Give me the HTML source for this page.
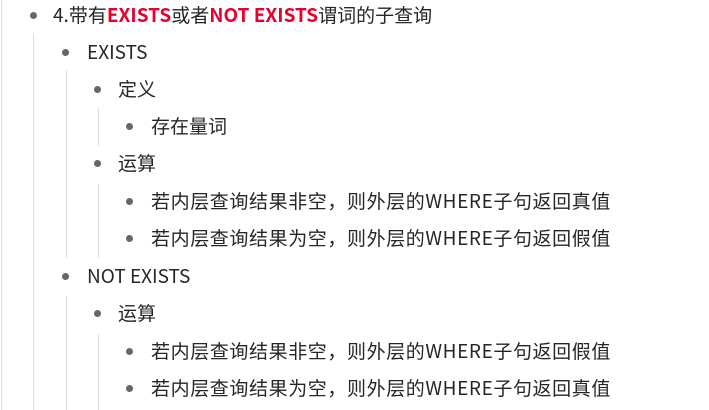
<!DOCTYPE html>
<html><head><meta charset="utf-8"><style>
body{margin:0;width:709px;height:410px;background:#fff;position:relative;overflow:hidden;font-family:"Noto Sans CJK SC","Liberation Sans",sans-serif;color:#262626;font-size:19px}
.t{position:absolute;white-space:nowrap;line-height:24px}
.b{position:absolute;width:7px;height:7px;border-radius:50%;background:#666}
.l{position:absolute;width:1px;background:#ddd}
.r{color:#e8002d;font-weight:bold}
.w{letter-spacing:0.6px}
</style></head><body>
<div class="l" style="left:1px;top:0;height:410px"></div>
<div class="l" style="left:33px;top:33px;height:377px"></div>
<div class="l" style="left:66px;top:70px;height:188px"></div>
<div class="l" style="left:98px;top:108px;height:38px"></div>
<div class="l" style="left:98px;top:184px;height:74px"></div>
<div class="l" style="left:66px;top:296px;height:114px"></div>
<div class="l" style="left:98px;top:334px;height:76px"></div>

<div class="b" style="left:30px;top:12px"></div><div class="t" style="left:53px;top:3px">4.带有<span class="r">EXISTS</span>或者<span class="r">NOT EXISTS</span>谓词的子查询</div>
<div class="b" style="left:62px;top:49px"></div><div class="t" style="left:87px;top:40px">EXISTS</div>
<div class="b" style="left:94px;top:86px"></div><div class="t" style="left:118px;top:77px">定义</div>
<div class="b" style="left:126px;top:123px"></div><div class="t" style="left:151px;top:114px">存在量词</div>
<div class="b" style="left:94px;top:160px"></div><div class="t" style="left:118px;top:151px">运算</div>
<div class="b" style="left:126px;top:198px"></div><div class="t w" style="left:151px;top:189px">若内层查询结果非空，则外层的WHERE子句返回真值</div>
<div class="b" style="left:126px;top:235px"></div><div class="t w" style="left:151px;top:226px">若内层查询结果为空，则外层的WHERE子句返回假值</div>
<div class="b" style="left:62px;top:273px"></div><div class="t" style="left:87px;top:264px">NOT EXISTS</div>
<div class="b" style="left:94px;top:310px"></div><div class="t" style="left:118px;top:301px">运算</div>
<div class="b" style="left:126px;top:348px"></div><div class="t w" style="left:151px;top:339px">若内层查询结果非空，则外层的WHERE子句返回假值</div>
<div class="b" style="left:126px;top:385px"></div><div class="t w" style="left:151px;top:376px">若内层查询结果为空，则外层的WHERE子句返回真值</div>
</body></html>
